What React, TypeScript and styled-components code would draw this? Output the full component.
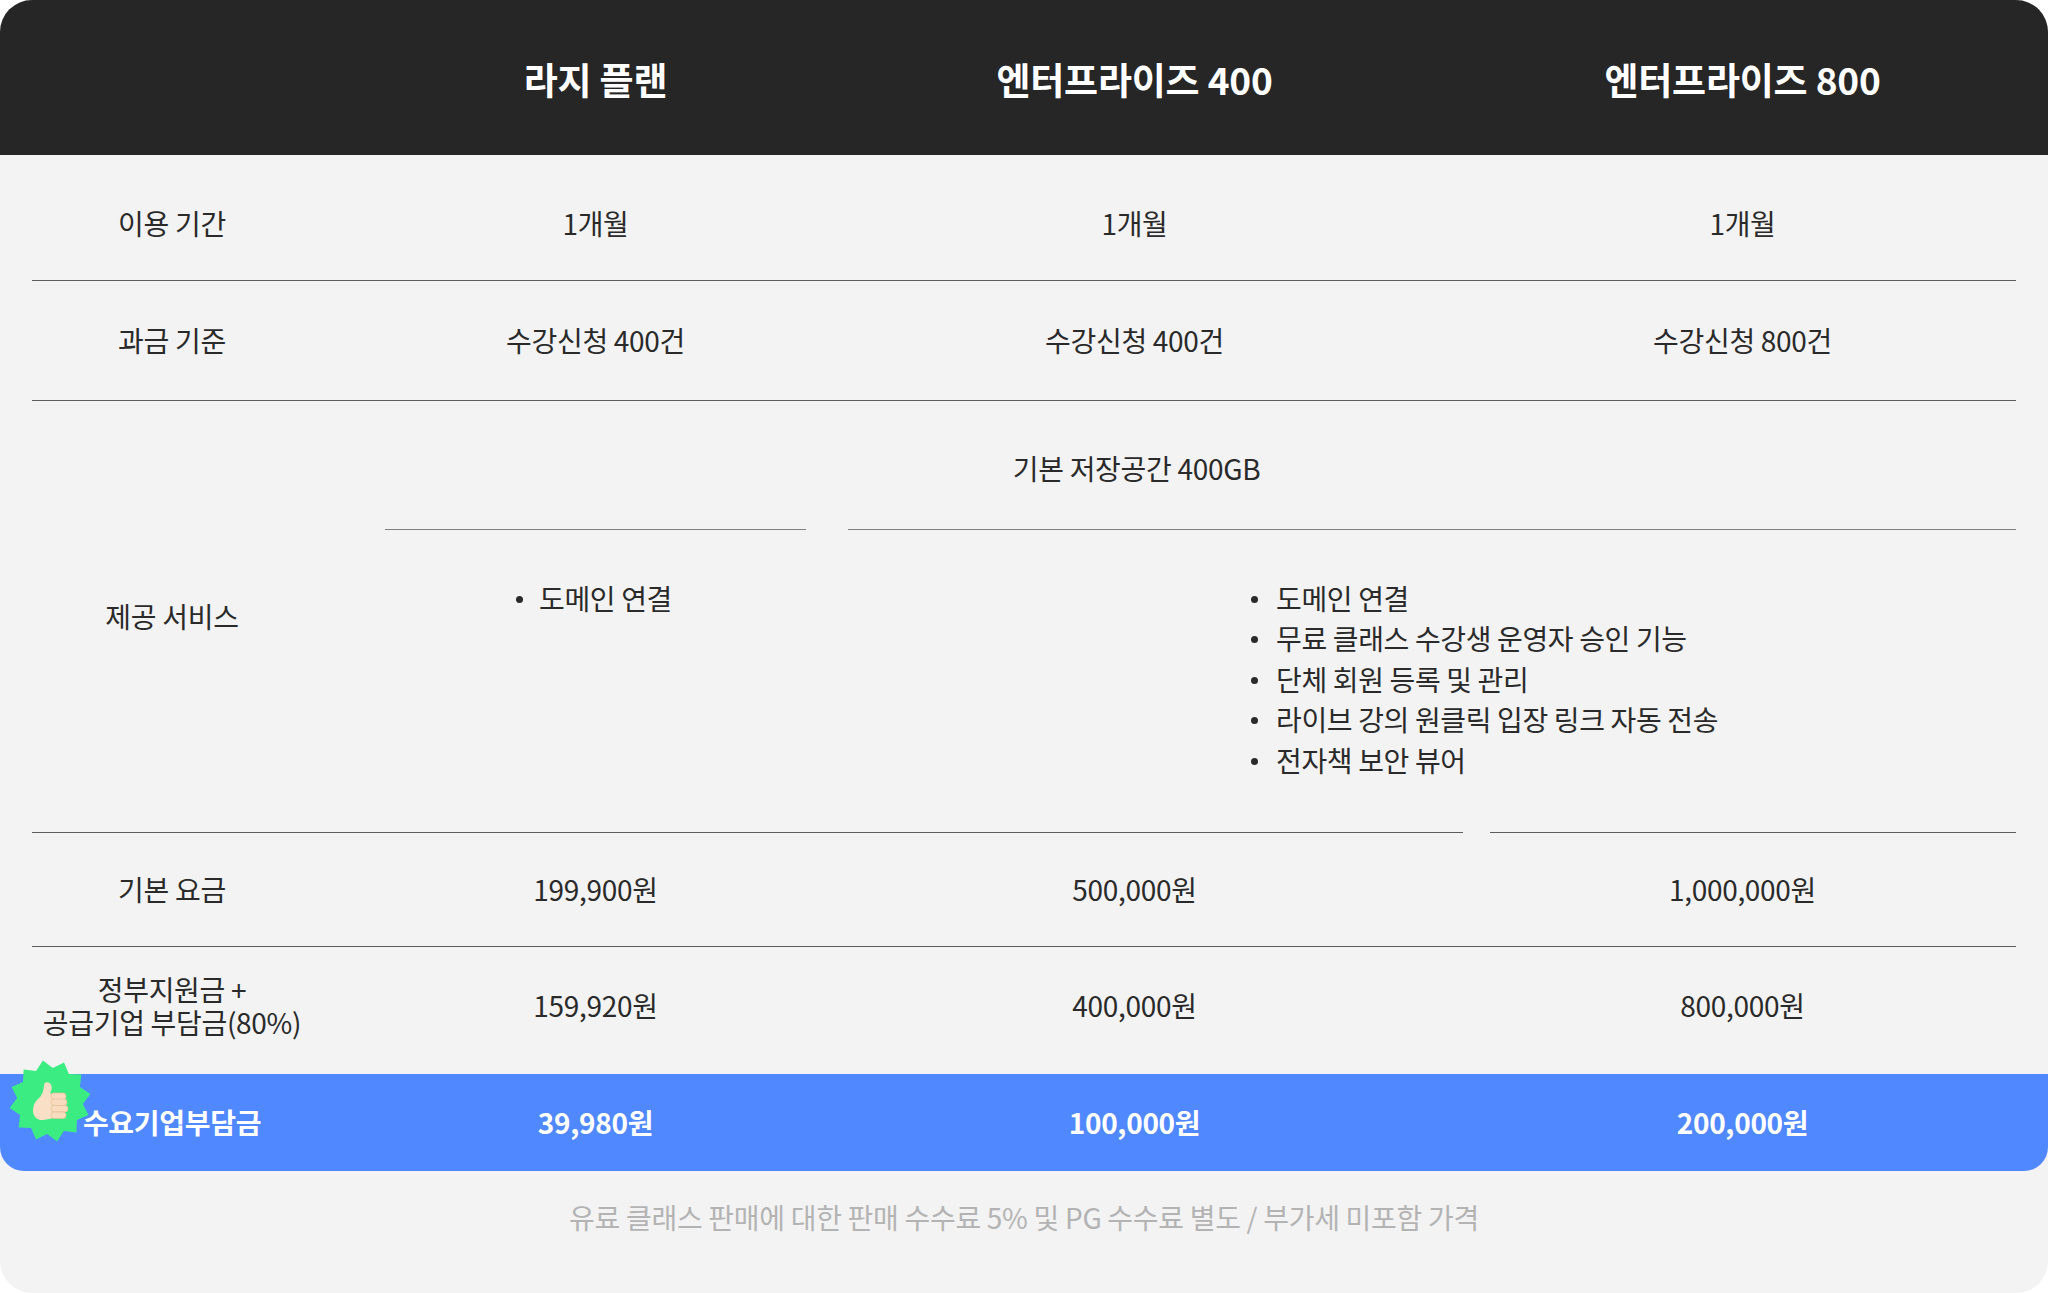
import React from "react";
import styled, { createGlobalStyle } from "styled-components";

const Global = createGlobalStyle`
  html, body { margin: 0; padding: 0; background: #fff; }
  body { font-family: "Noto Sans CJK KR", "Noto Sans", sans-serif; }
`;

const Card = styled.div`
  width: 2048px;
  height: 1293px;
  background: #f3f3f3;
  border-radius: 32px;
  overflow: hidden;
  display: flex;
  flex-direction: column;
  color: #2a2a2a;
  font-size: 28px;
  letter-spacing: -0.3px;
`;

const Columns = "353px 421px 657px 553px";

const Header = styled.div`
  height: 151px;
  padding: 4px 32px 0;
  background: #262626;
  color: #fff;
  display: grid;
  grid-template-columns: ${Columns};
  align-items: center;
  font-size: 37px;
  font-weight: 700;
  letter-spacing: -0.2px;
  text-align: center;
`;

const Body = styled.div`
  padding: 0 32px;
`;

const Row = styled.div<{ $h: number; $top?: number; $bottom?: number }>`
  height: ${(p) => p.$h}px;
  box-sizing: border-box;
  padding: ${(p) => p.$top ?? 0}px 0 ${(p) => p.$bottom ?? 0}px;
  display: grid;
  grid-template-columns: ${Columns};
  align-items: center;
  text-align: center;
  border-bottom: 1px solid #5c5c5c;
`;

const PlainRow = styled(Row)`
  border-bottom: none;
`;

const Label = styled.div`
  padding-right: 73px;
  line-height: 33px;
`;

const Value = styled.div`
  white-space: nowrap;
  line-height: 33px;
`;

const LastValue = styled(Value)`
  padding-left: 6px;
`;

const Service = styled.div`
  display: grid;
  grid-template-columns: 353px 421px 42px 1168px;
  grid-template-rows: 128px 303px;
  align-items: stretch;
  height: 431px;
`;

const ServiceLabel = styled(Label)`
  grid-row: 1 / 3;
  align-self: center;
  text-align: center;
`;

const Storage = styled.div`
  grid-column: 2 / 5;
  padding: 6px 128px 0 0;
  display: flex;
  align-items: center;
  justify-content: center;
`;

const FeatureCell = styled.div<{ $col: number; $left: number }>`
  grid-column: ${(p) => p.$col};
  border-top: 1px solid #808080;
  padding: 48px 0 0 ${(p) => p.$left}px;
`;

const FeatureList = styled.ul`
  list-style: none;
  margin: 0;
  padding: 0;
  display: flex;
  flex-direction: column;
  letter-spacing: -0.35px;
`;

const Feature = styled.li<{ $indent: number }>`
  position: relative;
  height: 40.4px;
  line-height: 40.4px;
  padding-left: ${(p) => p.$indent}px;
  white-space: nowrap;
  &::before {
    content: "";
    position: absolute;
    left: 0;
    top: 18px;
    width: 7px;
    height: 7px;
    border-radius: 50%;
    background: #2a2a2a;
  }
`;

const Rules = styled.div`
  display: flex;
  gap: 27px;
`;

const Rule = styled.div<{ $w: number }>`
  width: ${(p) => p.$w}px;
  height: 1px;
  background: #5c5c5c;
`;

const Highlight = styled.div`
  position: relative;
  height: 97px;
  box-sizing: border-box;
  padding: 0 32px 1px;
  background: #5088ff;
  color: #fff;
  border-radius: 0 0 24px 24px;
  display: grid;
  grid-template-columns: ${Columns};
  align-items: center;
  text-align: center;
  font-weight: 700;
`;

const Badge = styled.svg`
  position: absolute;
  left: 9px;
  top: -14px;
  width: 82px;
  height: 82px;
`;

const Footer = styled.div`
  flex: 1;
  display: flex;
  align-items: center;
  justify-content: center;
  padding-bottom: 31px;
  color: #b3b3b3;
  font-size: 28px;
`;

const starPoints = Array.from({ length: 24 }, (_, i) => {
  const r = i % 2 === 0 ? 41 : 33;
  const a = ((-10 + i * 15) * Math.PI) / 180;
  return `${(41 + r * Math.sin(a)).toFixed(1)},${(41 - r * Math.cos(a)).toFixed(1)}`;
}).join(" ");

const fingers = [
  { y: 33, w: 15 },
  { y: 39, w: 16 },
  { y: 45.5, w: 17 },
  { y: 52, w: 15 },
];

function ThumbBadge() {
  return (
    <Badge viewBox="0 0 82 82">
      <polygon points={starPoints} fill="#3bec82" />
      <path
        d="M35.500 23.500c1.500-2 5-1.500 6.500 1 1.500 3 .5 6-1 9h2v25l-9 1.500c-5 .5-10-3-10-9 0-5 1.500-9 5-12 3-2.500 5-6 5.500-10 .2-2 .5-4 1-5.500z"
        fill="#f9dfc6"
      />
      {fingers.map((f) => (
        <rect
          key={f.y}
          x={42}
          y={f.y}
          width={f.w}
          height={6.5}
          rx={3}
          fill="#f9dcc0"
          stroke="#e8bf98"
          strokeWidth={0.7}
        />
      ))}
    </Badge>
  );
}

export default function App() {
  return (
    <>
      <Global />
      <Card>
        <Header>
          <div />
          <Value>라지 플랜</Value>
          <Value>엔터프라이즈 400</Value>
          <LastValue>엔터프라이즈 800</LastValue>
        </Header>
        <Body>
          <Row $h={126} $top={12}>
            <Label>이용 기간</Label>
            <Value>1개월</Value>
            <Value>1개월</Value>
            <LastValue>1개월</LastValue>
          </Row>
          <Row $h={120}>
            <Label>과금 기준</Label>
            <Value>수강신청 400건</Value>
            <Value>수강신청 400건</Value>
            <LastValue>수강신청 800건</LastValue>
          </Row>
          <Service>
            <ServiceLabel>제공 서비스</ServiceLabel>
            <Storage>기본 저장공간 400GB</Storage>
            <FeatureCell $col={2} $left={131}>
              <FeatureList>
                <Feature $indent={23}>도메인 연결</Feature>
              </FeatureList>
            </FeatureCell>
            <FeatureCell $col={4} $left={403}>
              <FeatureList>
                <Feature $indent={25}>도메인 연결</Feature>
                <Feature $indent={25}>무료 클래스 수강생 운영자 승인 기능</Feature>
                <Feature $indent={25}>단체 회원 등록 및 관리</Feature>
                <Feature $indent={25}>라이브 강의 원클릭 입장 링크 자동 전송</Feature>
                <Feature $indent={25}>전자책 보안 뷰어</Feature>
              </FeatureList>
            </FeatureCell>
          </Service>
          <Rules>
            <Rule $w={1431} />
            <Rule $w={526} />
          </Rules>
          <Row $h={114} $bottom={1}>
            <Label>기본 요금</Label>
            <Value>199,900원</Value>
            <Value>500,000원</Value>
            <LastValue>1,000,000원</LastValue>
          </Row>
          <PlainRow $h={127} $bottom={10}>
            <Label>
              정부지원금 +
              <br />
              공급기업 부담금(80%)
            </Label>
            <Value>159,920원</Value>
            <Value>400,000원</Value>
            <LastValue>800,000원</LastValue>
          </PlainRow>
        </Body>
        <Highlight>
          <Label>수요기업부담금</Label>
          <Value>39,980원</Value>
          <Value>100,000원</Value>
          <LastValue>200,000원</LastValue>
          <ThumbBadge />
        </Highlight>
        <Footer>유료 클래스 판매에 대한 판매 수수료 5% 및 PG 수수료 별도 / 부가세 미포함 가격</Footer>
      </Card>
    </>
  );
}
